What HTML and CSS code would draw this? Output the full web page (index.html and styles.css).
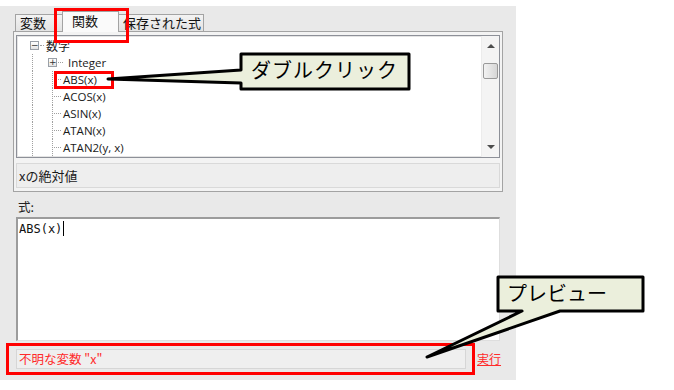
FILE: index.html
```html
<!DOCTYPE html>
<html lang="ja">
<head>
<meta charset="utf-8">
<link rel="stylesheet" href="styles.css">
</head>
<body>
<div class="panel">
  <div class="tabs">
    <div class="tab tab-first">変数</div>
    <div class="tab active">関数</div>
    <div class="tab tab-last">保存された式</div>
  </div>
  <div class="tabpage">
    <div class="tree">
      <div class="tree-items">
        <div class="row">
          <span class="sp13"></span><span class="box">−</span><span class="hcon w4"></span><span class="txt cjk">数字</span>
        </div>
        <div class="row">
          <span class="sp15"></span><span class="guide g15"></span><span class="box">+</span><span class="hcon w6"></span><span class="txt t3">Integer</span>
        </div>
        <div class="row">
          <span class="sp15"></span><span class="guide g20"></span><span class="guide elbow"></span><span class="txt">ABS(x)</span>
        </div>
        <div class="row">
          <span class="sp15"></span><span class="guide g20"></span><span class="guide elbow"></span><span class="txt">ACOS(x)</span>
        </div>
        <div class="row">
          <span class="sp15"></span><span class="guide g20"></span><span class="guide elbow"></span><span class="txt">ASIN(x)</span>
        </div>
        <div class="row">
          <span class="sp15"></span><span class="guide g20"></span><span class="guide elbow"></span><span class="txt">ATAN(x)</span>
        </div>
        <div class="row">
          <span class="sp15"></span><span class="guide g20"></span><span class="guide elbow"></span><span class="txt">ATAN2(y, x)</span>
        </div>
      </div>
      <div class="scrollbar">
        <span class="arrow up"></span>
        <span class="thumb"></span>
        <span class="fill"></span>
        <span class="arrow down"></span>
      </div>
    </div>
    <div class="desc">xの絶対値</div>
  </div>
  <div class="label">式:</div>
  <div class="editor"><span class="code">ABS(x)</span><span class="caret"></span></div>
  <div class="preview-row">
    <div class="preview">不明な変数 "x"</div>
    <a class="run">実行</a>
  </div>
</div>

<div class="hl hl-tab"></div>
<div class="hl hl-abs"></div>
<div class="hl hl-preview"></div>

<svg class="callouts" width="674" height="390" viewBox="0 0 674 390">
  <path d="M241,54 H409 V89 H241 V83 L108,79 L241,70 Z" />
  <path d="M498,277 H643 V311 H560 L427,357 L522,311 H498 Z" />
</svg>
<div class="note note-dbl">ダブルクリック</div>
<div class="note note-prev">プレビュー</div>
</body>
</html>
```

FILE: styles.css
```css
html, body {
  margin: 0;
  padding: 0;
  background: #ffffff;
}
body {
  width: 674px;
  height: 390px;
  position: relative;
  overflow: hidden;
  font-family: "Noto Sans CJK JP", "Noto Sans", sans-serif;
  font-size: 12px;
  color: #000;
}
.panel {
  margin-top: 6px;
  width: 516px;
  height: 374px;
  box-sizing: border-box;
  background: #e9e9e9;
  padding: 0 0 0 13px;
  display: flex;
  flex-direction: column;
}
.tabs {
  display: flex;
  align-items: flex-end;
  height: 25px;
  padding-left: 2px;
  position: relative;
  z-index: 2;
}
.tab {
  height: 17px;
  box-sizing: border-box;
  border: 1px solid #a3a3a3;
  border-bottom: none;
  background: linear-gradient(#f3f3f3, #e3e3e3);
  font-size: 13px;
  line-height: 15px;
  color: #111;
}
.tab-first {
  width: 49px;
  padding-left: 4px;
}
.tab-last {
  width: 86px;
  padding-left: 4px;
  margin-left: -1px;
}
.tab.active {
  width: 57px;
  height: 21px;
  margin: 0 0 -1px -2px;
  padding-left: 9px;
  background: #fafafa;
  line-height: 18px;
  position: relative;
  z-index: 2;
}
.tabpage {
  width: 490px;
  height: 161px;
  box-sizing: border-box;
  border: 1px solid #a3a3a3;
  background: #f3f3f3;
  padding: 3px 0 0 2px;
  display: flex;
  flex-direction: column;
  position: relative;
  z-index: 1;
}
.tree {
  width: 484px;
  height: 123px;
  box-sizing: border-box;
  border: 1px solid #8d9098;
  box-shadow: inset 0 0 0 1px #e4e4e4;
  background: #fff;
  display: flex;
}
.tree-items {
  flex: 1;
  padding-top: 1px;
  overflow: hidden;
}
.row {
  height: 17px;
  display: flex;
  align-items: center;
  font-family: "Open Sans", "Noto Sans", sans-serif;
  font-size: 11.5px;
  color: #1a1a1a;
}
.row .cjk {
  font-family: "Noto Sans CJK JP", sans-serif;
  font-size: 12px;
}
.sp13 { width: 13px; flex: none; }
.sp15 { width: 15px; flex: none; }
.guide {
  align-self: stretch;
  flex: none;
  border-left: 1px dotted #a0a0a0;
  box-sizing: border-box;
}
.g15 { width: 0; margin-right: 15px; }
.g20 { width: 20px; }
.elbow {
  width: 9px;
  position: relative;
}
.elbow::after {
  content: "";
  position: absolute;
  left: 1px;
  top: 8px;
  width: 7px;
  border-top: 1px dotted #a0a0a0;
}
.box {
  width: 9px;
  height: 9px;
  flex: none;
  box-sizing: border-box;
  border: 1px solid #9aa0a8;
  background: linear-gradient(#ffffff, #e4e4e4);
  font-size: 9px;
  line-height: 6px;
  text-align: center;
  color: #333;
  font-family: "DejaVu Sans", sans-serif;
}
.hcon {
  flex: none;
  height: 0;
  border-top: 1px dotted #a0a0a0;
}
.w4 { width: 4px; margin-left: 1px; }
.w6 { width: 5px; margin-left: 1px; }
.txt { margin-left: 2px; white-space: nowrap; }
.t3 { margin-left: 5px; }
.scrollbar {
  width: 17px;
  flex: none;
  background: #f4f4f4;
  border-left: 1px solid #ececec;
  display: flex;
  flex-direction: column;
  align-items: center;
}
.arrow {
  width: 0;
  height: 0;
  border-left: 4px solid transparent;
  border-right: 4px solid transparent;
  flex: none;
}
.arrow.up {
  margin-top: 8px;
  border-bottom: 4px solid #4d4d4d;
}
.arrow.down {
  margin-bottom: 8px;
  border-top: 4px solid #4d4d4d;
}
.thumb {
  margin-top: 15px;
  width: 15px;
  height: 16px;
  box-sizing: border-box;
  border: 1px solid #999;
  border-radius: 2px;
  background: linear-gradient(90deg, #f2f2f2, #d6d6d6);
  flex: none;
}
.fill { flex: 1; }
.desc {
  margin-top: 5px;
  width: 484px;
  height: 25px;
  box-sizing: border-box;
  border: 1px solid #d9d9d9;
  background: #eeeeee;
  padding-left: 2px;
  font-size: 13px;
  line-height: 23px;
  color: #1a1a1a;
}
.label {
  margin-top: 7px;
  padding-left: 5px;
  height: 18px;
  font-size: 12.5px;
  line-height: 16px;
  color: #222;
}
.editor {
  margin-left: 3px;
  width: 484px;
  height: 124px;
  box-sizing: border-box;
  background: #fff;
  border-top: 2px solid #9c9c9c;
  border-left: 2px solid #9c9c9c;
  border-right: 1px solid #dedede;
  border-bottom: 1px solid #dedede;
  padding: 2px 0 0 1px;
  display: flex;
  align-items: flex-start;
}
.code {
  font-family: "DejaVu Sans Mono", "Liberation Mono", monospace;
  font-size: 12px;
  line-height: 16px;
  color: #111;
}
.caret {
  width: 1px;
  height: 15px;
  background: #000;
  margin-left: 1px;
}
.preview-row {
  margin-top: 8px;
  margin-left: 3px;
  display: flex;
  align-items: center;
}
.preview {
  width: 450px;
  height: 20px;
  box-sizing: border-box;
  border: 1px solid #d6d6d6;
  background: #efefef;
  padding-left: 2px;
  font-size: 12.5px;
  line-height: 18px;
  color: #ff2a2a;
}
.run {
  margin-left: 11px;
  font-size: 12px;
  color: #ff2a2a;
  text-decoration: underline;
  line-height: 16px;
}
.hl {
  position: absolute;
  border: 3px solid #ff0000;
  box-sizing: border-box;
  z-index: 5;
}
.hl-tab { left: 54px; top: 8px; width: 75px; height: 35px; }
.hl-abs { left: 54px; top: 71px; width: 60px; height: 18px; }
.hl-preview { left: 6px; top: 343px; width: 469px; height: 32px; }
.callouts {
  position: absolute;
  left: 0;
  top: 0;
  z-index: 6;
}
.callouts path {
  fill: #ebefdc;
  stroke: #000;
  stroke-width: 3;
  stroke-linejoin: round;
}
.note {
  position: absolute;
  z-index: 7;
  font-family: "Noto Sans CJK JP", sans-serif;
  font-size: 20px;
  line-height: 24px;
  color: #000;
  white-space: nowrap;
}
.note-dbl { left: 251px; top: 58px; letter-spacing: 1px; }
.note-prev { left: 507px; top: 281px; }
```
